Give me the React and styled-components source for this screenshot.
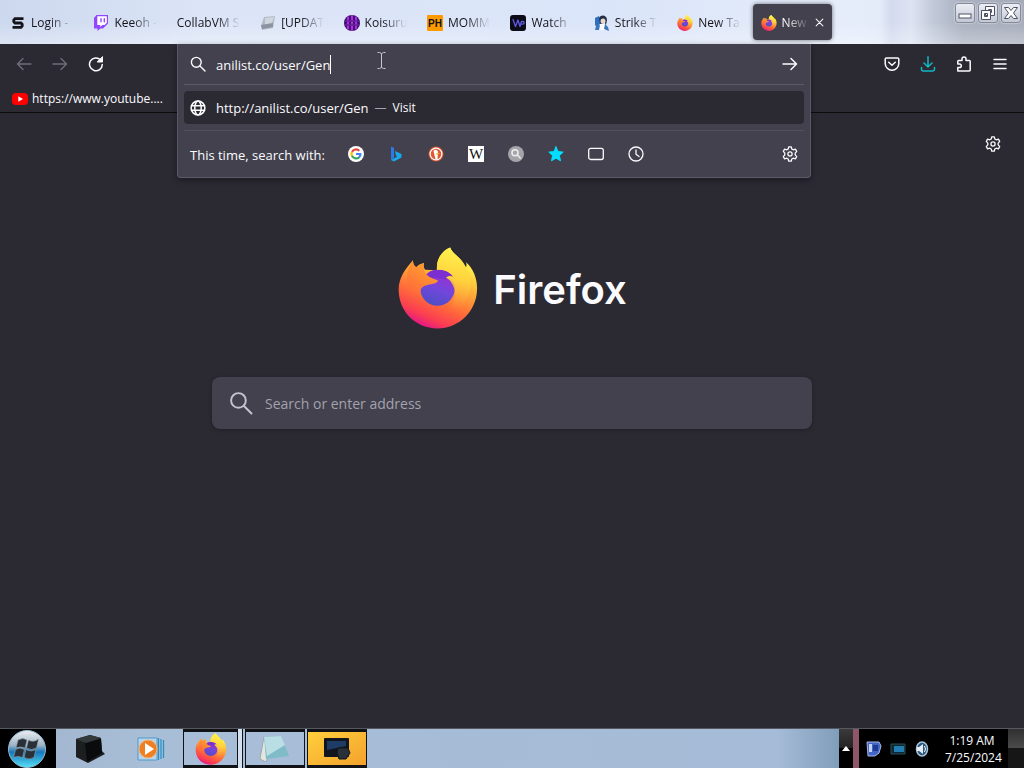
import React, { useId } from "react";
import styled, { createGlobalStyle } from "styled-components";

const ui = `"Open Sans", "Noto Sans", sans-serif`;

const GlobalStyle = createGlobalStyle`
  * { box-sizing: border-box; }
  body { margin: 0; background: #2b2a33; color: #fbfbfe; font: 12px/16px ${ui}; }
  button { border: 0; padding: 0; background: none; color: inherit; font: inherit; }
  input { border: 0; padding: 0; outline: 0; background: none; color: inherit; font: inherit; }
  svg { display: block; flex: none; }
`;

const Desktop = styled.div`
  display: flex;
  flex-direction: column;
  min-height: 100vh;
`;

const TitleBar = styled.header`
  display: flex;
  justify-content: space-between;
  align-items: flex-start;
  height: 44px;
  background:
    linear-gradient(#fff0 50%, #ffffff50),
    linear-gradient(90deg, #ccd8ee 0%, #dce5f7 20%, #dbe5f9 60%, #e6edfa 84%, #e3eaf8 86%, #d3dbee 87%, #dde3f2 89%, #c3cbdb 91%, #a9b0bf 94%, #a6abba 100%);
  color: #15141a;
`;

const TabStrip = styled.nav`
  display: grid;
  grid-template-columns: repeat(10, minmax(0, 1fr));
  flex: 0 1 834px;
  height: 44px;
  padding: 4px 0;
`;

const Tab = styled.button`
  display: flex;
  align-items: center;
  gap: 5px;
  min-width: 0;
  margin: 0 2px;
  padding: 1px 8px 0;
  border-radius: 4px;
  text-align: left;
  background: ${(p) => (p.$active ? "#42414d" : "transparent")};
  color: ${(p) => (p.$active ? "#fbfbfe" : "#15141a")};
  box-shadow: ${(p) => (p.$active ? "0 0 4px #0008" : "none")};
`;

const TabLabel = styled.span`
  flex: 1;
  min-width: 0;
  overflow: hidden;
  white-space: nowrap;
  mask-image: linear-gradient(to left, transparent, #000 24px);
`;

const WindowControls = styled.div`
  display: flex;
  gap: 3px;
  padding: 3px 3px 0 0;
`;

const WindowButton = styled.button`
  display: grid;
  place-items: center;
  width: 20px;
  height: 20px;
  border: 1px solid #868b9b;
  border-radius: 3px;
  background: linear-gradient(#eceef4, #c3c8d5);
  box-shadow: 0 0 2px #fff;
`;

const NavBar = styled.div`
  display: flex;
  align-items: center;
  height: 40px;
  padding: 0 6px;
`;

const ToolButton = styled.button`
  display: grid;
  place-items: center;
  width: 36px;
  height: 32px;
  color: ${(p) => p.$tone || "#fbfbfe"};
`;

const AddressSlot = styled.div`
  position: relative;
  flex: 1;
  align-self: stretch;
  margin: 0 63px;
`;

const AddressPanel = styled.section`
  position: absolute;
  inset: 0 0 auto 0;
  z-index: 2;
  padding: 0 6px;
  background: #42414d;
  border: 1px solid #5b5a67;
  border-top: 0;
  border-radius: 0 0 4px 4px;
  box-shadow: 0 2px 6px #0006;
  font-size: 13px;
  line-height: 20px;
`;

const AddressRow = styled.form`
  display: flex;
  align-items: center;
  height: 41px;
  padding: 0 6px;
  border-bottom: 1px solid #5b5a67;
`;

const AddressInput = styled.input`
  field-sizing: content;
  margin-left: 10px;
  padding-top: 2px;
`;

const Caret = styled.span`
  width: 1px;
  height: 19px;
  background: #fff;
`;

const GoButton = styled.button`
  margin-left: auto;
`;

const Pointer = styled.svg`
  position: absolute;
  left: 199px;
  top: 7px;
`;

const Result = styled.a`
  display: flex;
  align-items: center;
  height: 33px;
  margin: 6px 0;
  padding: 0 6px;
  border-radius: 4px;
  background: #2b2a33;
  color: #fbfbfe;
  text-decoration: none;
`;

const ResultUrl = styled.span`
  margin-left: 10px;
`;

const ResultAction = styled.span`
  font-size: 12px;
  &::before {
    content: "—";
    margin: 0 6px;
    color: #a5a4ae;
  }
`;

const Engines = styled.div`
  display: flex;
  align-items: center;
  height: 47px;
  padding: 0 6px;
  border-top: 1px solid #52515e;
`;

const EnginesLabel = styled.span`
  width: 134px;
  padding-top: 2px;
  white-space: nowrap;
`;

const EngineList = styled.div`
  display: flex;
  margin-left: 12px;
`;

const EngineButton = styled.button`
  display: grid;
  place-items: center;
  width: 40px;
  height: 32px;
`;

const SettingsButton = styled.button`
  margin-left: auto;
`;

const Bookmarks = styled.nav`
  display: flex;
  align-items: center;
  height: 29px;
  padding: 0 12px;
  border-bottom: 1px solid #0c0c0d;
`;

const Bookmark = styled.a`
  display: flex;
  align-items: center;
  gap: 4px;
  padding-top: 1px;
  color: #fbfbfe;
  text-decoration: none;
`;

const NewTabPage = styled.main`
  flex: 1;
  display: flex;
  flex-direction: column;
  align-items: center;
  padding: 23px 23px 40px;
`;

const Personalize = styled.button`
  align-self: flex-end;
`;

const Brand = styled.div`
  display: flex;
  align-items: center;
  gap: 14px;
  margin-top: 95px;
`;

const Wordmark = styled.h1`
  margin: 0;
  padding-top: 4px;
  color: #fbfbfe;
  font: 600 40px/48px Inter, sans-serif;
`;

const SearchBox = styled.label`
  display: flex;
  align-items: center;
  gap: 12px;
  width: 100%;
  max-width: 600px;
  height: 52px;
  margin-top: 48px;
  padding: 0 17px;
  border-radius: 8px;
  background: #42414d;
  box-shadow: 0 1px 4px #0004;
  color: #c4c3ce;
`;

const SearchInput = styled.input`
  flex: 1;
  padding-top: 2px;
  font-size: 14px;
  line-height: 20px;
  &::placeholder { color: #a3a2ae; opacity: 1; }
`;

const TaskBar = styled.footer`
  display: flex;
  height: 40px;
  border-top: 1px solid #55585f;
  background: linear-gradient(90deg, #9fb4cc, #a8bdd6 14%, #a5bbd7 76%, #7f9dba 82%);
`;

const StartButton = styled.button`
  display: grid;
  place-items: center;
  width: 56px;
  padding-right: 2px;
  background: #000;
`;

const TaskButtons = styled.div`
  display: flex;
  flex: 1;
`;

const Pinned = styled.button`
  display: grid;
  place-items: center;
  width: 61px;
  padding-left: 6px;
`;

const OpenTask = styled.button`
  display: grid;
  place-items: center;
  width: 60px;
  margin-left: 2px;
  border: solid #101216;
  border-width: 3px 1px;
  background: ${(p) => (p.$alert ? "linear-gradient(150deg, #ffcf3c, #f3a12c)" : "#a8bdd8")};
`;

const WindowStack = styled.div`
  display: flex;
  margin-left: 5px;
  padding-right: 4px;
  border-right: 1px solid #101216;
  background: #d5e0ee;
  ${OpenTask} {
    width: 55px;
    margin-left: 0;
  }
`;

const Tray = styled.div`
  display: flex;
  align-items: center;
  background: #000;
`;

const TrayToggle = styled.button`
  display: grid;
  place-items: center;
  align-self: stretch;
  width: 20px;
  border-right: 6px solid #8e5668;
  background: linear-gradient(#3a3a3a, #222 50%, #000 50%);
`;

const TrayIcons = styled.div`
  display: flex;
  gap: 8px;
  padding: 0 15px 0 7px;
`;

const Clock = styled.time`
  width: 54px;
  text-align: center;
  white-space: nowrap;
  font-size: 12px;
  line-height: 17px;
`;

const ShowDesktop = styled.button`
  align-self: stretch;
  width: 16px;
  margin-left: 9px;
  background: linear-gradient(#303030, #4a4a4a 48%, #161616 50%);
`;

const Icon = ({ size = 16, children, ...rest }) => (
  <svg width={size} height={size} viewBox="0 0 16 16" fill="none" stroke="currentColor"
    strokeWidth="1.3" strokeLinecap="round" strokeLinejoin="round" aria-hidden="true" {...rest}>
    {children}
  </svg>
);

function FirefoxLogo({ size }) {
  const id = useId();
  const ref = (n) => `url(#${id}${n})`;
  return (
    <svg width={size} height={size} viewBox="0 0 80 83" aria-hidden="true">
      <defs>
        <linearGradient id={`${id}a`} x1="0.75" y1="0.1" x2="0.35" y2="1">
          <stop offset="0.1" stopColor="#ffe847" />
          <stop offset="0.4" stopColor="#ffa436" />
          <stop offset="0.65" stopColor="#ff6a3a" />
          <stop offset="0.86" stopColor="#fb3d52" />
          <stop offset="1" stopColor="#e31587" />
        </linearGradient>
        <linearGradient id={`${id}b`} x1="0.6" y1="0" x2="0.5" y2="1">
          <stop offset="0" stopColor="#fff44f" />
          <stop offset="0.5" stopColor="#ffd23c" />
          <stop offset="1" stopColor="#ff9640" stopOpacity="0" />
        </linearGradient>
        <linearGradient id={`${id}c`} x1="0.7" y1="0" x2="0.3" y2="1">
          <stop offset="0" stopColor="#a02ccf" />
          <stop offset="0.5" stopColor="#7346dc" />
          <stop offset="1" stopColor="#4a4fc4" />
        </linearGradient>
        <linearGradient id={`${id}d`} x1="0.8" y1="0" x2="0.2" y2="1">
          <stop offset="0" stopColor="#ffa62e" />
          <stop offset="0.5" stopColor="#ff8a34" />
          <stop offset="1" stopColor="#ff6a3a" />
        </linearGradient>
      </defs>
      <path fill={ref("a")} d="M14.7 13.5C14.5 16.5 15.5 19 18 20.5C20 18.5 23 17 25.7 16.3C25 19 25.5 21 27 23C31 23 35 23.5 39 23.5C38 13 43 4.5 52.3 .5C54 6 61 9 65.5 16L68 21C69 19.500 69 18 68.500 15.500C76 22 80 33 79.500 43C79 65 61 82.500 39.500 82.500C17 82.500 0 65 .2 43C.3 31 7 22 14.700 13.500Z" />
      <circle cx="39.500" cy="42" r="17.500" fill={ref("c")} />
      <path fill="#7b2fd0" d="M27 29C34 20 50 21 56 31L48 33C42 31 34 31 27 32Z" />
      <path fill={ref("b")} d="M52.300 .5C54 6 61 9 65.500 16C75 29 76 48 64 59C60 63 55 65 49 64C57 58 59 49 56 41C54 35 51 32 48 31C50 29 53 29 56 30C51 25 45 22 39 23.500C38 13 43 4.500 52.300 .5Z" />
      <path fill={ref("d")} d="M14.700 13.500C14.500 16.500 15.500 19 18 20.500C20 18.500 23 17 25.700 16.300C25 20 26 24 27.500 27C31 31 36 32 40 34C39.500 37.500 32 37.500 27.500 39C23.500 40.500 21.500 43 22.500 47C17 48 12 44 10 39C7 34 8 24 14.700 13.500Z" />
    </svg>
  );
}

const SearchIcon = ({ size = 16, width = 1.4 }) => (
  <Icon size={size} strokeWidth={width}><circle cx="6.300" cy="6.300" r="4.900" /><path d="M10 10l5 5" /></Icon>
);

const GearIcon = () => (
  <Icon strokeWidth="1.300">
    <path d="M6.700 .8h2.600l.5 2.200 1.400.8 2.200-.6 1.300 2.200-1.500 1.700v1.800l1.500 1.700-1.300 2.200-2.200-.6-1.400.8-.5 2.200H6.700l-.5-2.200-1.400-.8-2.200.6-1.300-2.200 1.500-1.700V7.100L1.300 5.400l1.300-2.200 2.200.6 1.400-.8z" />
    <circle cx="8" cy="8" r="2.100" />
  </Icon>
);

const GlobeIcon = () => (
  <Icon strokeWidth="1.500"><circle cx="8" cy="8" r="6.900" /><ellipse cx="8" cy="8" rx="3.200" ry="6.900" /><path d="M1.500 5.700h13M1.500 10.300h13" /></Icon>
);

const CloseIcon = () => <Icon size={9} strokeWidth="1.800"><path d="M2 2l12 12M14 2L2 14" /></Icon>;

const favicons = {
  login: <Icon strokeWidth="2.800" stroke="#15141a" strokeLinecap="butt" strokeLinejoin="miter"><path d="M13.500 3.600H5L3.800 5v1.700L5 8h6l1.200 1.300V11L11 12.400H2.500" /></Icon>,
  twitch: <Icon stroke="none"><path fill="#9146ff" d="M3.500 0L1 3v10.500h3.500V16L7.300 13.500H10l5-5V0z" /><path fill="#fff" d="M4.300 1.200h9.500v6.600l-2.200 2.200H9.300l-2 2v-2h-3z" /><path stroke="#9146ff" strokeWidth="1.400" d="M8 3.700v3M11.300 3.700v3" /></Icon>,
  card: <Icon stroke="none"><path fill="#b3bac4" d="M4 2l11-1-2 12-11 2-1-4z" /><path fill="#ced5de" d="M5 3l9-1-2 6-7 2z" /><path fill="#8a94a1" d="M1 10l12-2v4L2 14z" /></Icon>,
  koisuru: <Icon stroke="none"><circle cx="8" cy="8" r="8" fill="#3d1470" /><path stroke="#b32be6" strokeWidth="2" d="M4 2.500v11M8 1v14M12 2.500v11" /><path stroke="#672099" d="M1 6h14M1 10h14" /></Icon>,
  ph: <Icon stroke="none"><rect width="16" height="16" rx="1" fill="#ff9900" /><text x="8" y="12" textAnchor="middle" fill="#111" fontFamily="Liberation Sans, sans-serif" fontWeight="700" fontSize="10">PH</text></Icon>,
  watch: <Icon stroke="none"><rect width="16" height="16" rx="3" fill="#0c0b18" /><path stroke="#5f5ae0" strokeWidth="1.300" d="M3 4.500l2.500 7L8 5l2 6.500 1.500-5h1.300a1.300 1.300 0 010 2.700h-1.500" /></Icon>,
  strike: <Icon stroke="none"><path fill="#2c70bf" d="M1 3l4-2 2 7-4 4-2-2z" /><path fill="#253044" d="M5 3c2-4 8-3 8 2l-1 5-6-1z" /><circle cx="9" cy="6" r="2.500" fill="#e9d8d0" /><path fill="#fff" d="M6 9l5-1 2 7H5z" /><path fill="#3b75bb" d="M11 9l3 3 1 4-5-2zM2 11l4-1-1 5H1z" /></Icon>,
  firefox: <FirefoxLogo size={16} />,
};

const tabs = [
  ["login", "Login -"], ["twitch", "Keeoh -"], [null, "CollabVM S"],
  ["card", "[UPDAT"], ["koisuru", "Koisuru"], ["ph", "MOMM"],
  ["watch", "Watch"], ["strike", "Strike T"], ["firefox", "New Ta"],
];

const engines = [
  ["Google", <Icon stroke="none"><circle cx="8" cy="8" r="8" fill="#fff" /><g strokeWidth="2.200" strokeLinecap="butt"><path stroke="#ea4335" d="M4 6a4.500 4.500 0 017.300-1.200" /><path stroke="#fbbc05" d="M4.200 10.300A4.500 4.500 0 014 5.800" /><path stroke="#34a853" d="M11.200 11.200a4.500 4.500 0 01-7.200-1.300" /><path stroke="#4285f4" d="M8 8h4.500c0 1.500-.5 2.500-1.500 3.400" /></g></Icon>],
  ["Bing", <Icon stroke="none"><path fill="#2c79e8" d="M3 .5l3 1.200v10.200L3 14z" /><path fill="#18a9ed" d="M7 5l6.500 3v3.500L6 15.500 3 14l6-3.300-1.200-2z" /></Icon>],
  ["DuckDuckGo", <Icon stroke="none"><circle cx="8" cy="8" r="7.500" fill="#de5833" /><circle cx="8" cy="8" r="5.900" stroke="#fff" strokeWidth="1.200" /><path fill="#fff" d="M5.500 5c1-2 4.500-1.500 4.500 1.500l-.5 6.500-2 .3z" /><path fill="#f5b62c" d="M8 7h4l-3 2z" /></Icon>],
  ["Wikipedia", <Icon stroke="none"><path fill="#fff" d="M0 0h16v16H0z" /><text x="8" y="13" textAnchor="middle" fill="#111" fontFamily="Liberation Serif, serif" fontSize="15">W</text></Icon>],
  ["Search engine", <Icon stroke="none"><circle cx="8" cy="8" r="8" fill="#a5a4aa" /><circle cx="7" cy="6.800" r="3" stroke="#eee" strokeWidth="1.500" /><path stroke="#eee" strokeWidth="1.500" d="M9.300 9l3 3" /></Icon>],
  ["Bookmarks", <Icon fill="#00ddff" stroke="#00ddff" strokeWidth="1"><path d="M8 .8l2.100 4.800 5.100.5-3.800 3.500 1.100 5.200L8 12.200l-4.500 2.600 1.100-5.200L.8 6.100l5.100-.5z" /></Icon>],
  ["Tabs", <Icon><rect x=".7" y="2.300" width="14.600" height="11.200" rx="2" /></Icon>],
  ["History", <Icon><circle cx="8" cy="8" r="7" /><path d="M8 4v4.300l3 2.200" /></Icon>],
];

function WindowsOrb() {
  return (
    <svg width="40" height="38" viewBox="0 0 40 38" aria-hidden="true">
      <defs><linearGradient id="orb" x2="0" y2="1"><stop stopColor="#eceff2" /><stop offset=".4" stopColor="#9fb4c6" /><stop offset=".58" stopColor="#1577bb" /><stop offset="1" stopColor="#55e0f8" /></linearGradient></defs>
      <circle cx="20" cy="19" r="18.500" fill="url(#orb)" stroke="#93b9d0" />
      <path fill="#2a3038" stroke="#90a4b0" strokeWidth=".6" d="M11 10q5-3 9 0l-2 8q-5-2-9 0zM21.500 10q5 3 10-1l-2 9q-5 3-10 0zM8.500 19.500q4-3 9 0l-2 8q-5-2-9 0zM19 19.500q5 3 10 0l-2 8q-5 3-10 0z" />
    </svg>
  );
}

const BoxIcon = () => (
  <svg width="32" height="28" viewBox="0 0 32 28" aria-hidden="true">
    <path fill="#1c1f20" d="M2 4L16 0l11 3 1 13 3 3-17 9L2 22z" /><path fill="#0a0b0c" d="M11 8L27 4l1 14-15 9z" /><path fill="#34393b" d="M2 4L16 0l11 3-15 5z" />
  </svg>
);

const PlayerIcon = () => (
  <svg width="28" height="24" viewBox="0 0 28 24" aria-hidden="true">
    <path fill="#b8d5ef" stroke="#4d9bc8" d="M1 1h19v22H1z" /><path stroke="#268fc4" strokeWidth="1.200" d="M21.500 1v22M24 2v20M26.500 3v18" /><circle cx="11" cy="12" r="9" fill="#ee7f22" stroke="#f5b175" /><path fill="#fff" d="M8 6l9 6-9 6z" />
  </svg>
);

const NotesIcon = () => (
  <svg width="32" height="26" viewBox="0 0 32 26" aria-hidden="true">
    <path fill="#e3e6df" stroke="#8a8d88" strokeWidth=".6" d="M5 1L1 23l6 3 3-8z" /><path fill="#7fbcc8" d="M5 1l17-1 8 20-23 3z" /><path fill="#b9dfe5" d="M5 1l17-1 4 9-18 11z" />
  </svg>
);

const MonitorIcon = () => (
  <svg width="28" height="24" viewBox="0 0 28 24" aria-hidden="true">
    <rect x="1" y="1" width="25" height="19" rx="1" fill="#11161e" /><path fill="#1f3c66" d="M4 4h19v5L4 13z" /><path fill="#293039" stroke="#10141a" d="M15 11h10l2 5-4 6h-7l-2-6z" />
  </svg>
);

export default function App() {
  return (
    <Desktop>
      <GlobalStyle />
      <TitleBar>
        <TabStrip aria-label="Tabs">
          {tabs.map(([icon, label]) => (
            <Tab key={label}>{icon && favicons[icon]}<TabLabel>{label}</TabLabel></Tab>
          ))}
          <Tab $active>{favicons.firefox}<TabLabel>New</TabLabel><CloseIcon /></Tab>
        </TabStrip>
        <WindowControls>
          <WindowButton aria-label="Minimize"><svg width="16" height="16"><rect x="2" y="9" width="12" height="4" fill="#fff" stroke="#4c5165" /></svg></WindowButton>
          <WindowButton aria-label="Restore"><svg width="16" height="16" fill="#fff" stroke="#4c5165"><path d="M5.500 1.500h9v9h-9zM8.500 4.500h3v3h-3z" fillRule="evenodd" /><path d="M1.500 5.500h9v9h-9zM4.500 8.500h3v3h-3z" fillRule="evenodd" /></svg></WindowButton>
          <WindowButton aria-label="Close"><svg width="16" height="16" fill="#fff" stroke="#4c5165"><path d="M1.500 2.500h4L8 5.500l2.500-3h4L10.500 8l4 5.500h-4L8 10.500l-2.500 3h-4L5.500 8z" /></svg></WindowButton>
        </WindowControls>
      </TitleBar>

      <NavBar>
        <ToolButton aria-label="Back" $tone="#6f6e78"><Icon><path d="M15 8H1.500M7 2.500L1.500 8 7 13.500" /></Icon></ToolButton>
        <ToolButton aria-label="Forward" $tone="#6f6e78"><Icon><path d="M1 8h13.500M9 2.500L14.500 8 9 13.500" /></Icon></ToolButton>
        <ToolButton aria-label="Reload"><Icon strokeWidth="1.500"><path d="M14.300 8.500A6.400 6.400 0 1112.600 4" /><path fill="currentColor" strokeWidth="1" d="M14.500 1v5h-5z" /></Icon></ToolButton>
        <AddressSlot>
          <AddressPanel>
            <AddressRow onSubmit={(e) => e.preventDefault()}>
              <SearchIcon />
              <AddressInput aria-label="Address" defaultValue="anilist.co/user/Gen" />
              <Caret />
              <GoButton aria-label="Go"><Icon strokeWidth="1.500"><path d="M1 8h13.500M9 2.500L14.500 8 9 13.500" /></Icon></GoButton>
            </AddressRow>
            <Result href="#visit">
              <GlobeIcon />
              <ResultUrl>http://anilist.co/user/Gen</ResultUrl>
              <ResultAction>Visit</ResultAction>
            </Result>
            <Engines>
              <EnginesLabel>This time, search with:</EnginesLabel>
              <EngineList>
                {engines.map(([name, icon]) => <EngineButton key={name} aria-label={name}>{icon}</EngineButton>)}
              </EngineList>
              <SettingsButton aria-label="Search settings"><GearIcon /></SettingsButton>
            </Engines>
            <Pointer width="9" height="19" fill="none" stroke="#c9c8d0" aria-hidden="true"><path d="M.5 1.500h2l2 1 2-1h2M4.500 2.500v14M.5 17.500h2l2-1 2 1h2" /></Pointer>
          </AddressPanel>
        </AddressSlot>
        <ToolButton aria-label="Save to Pocket"><Icon strokeWidth="1.500"><path d="M2.500 2h11a1.300 1.300 0 011.300 1.300V7.500a6.800 6.800 0 01-13.600 0V3.300A1.300 1.300 0 012.500 2z" /><path d="M4.700 6.300L8 9.300l3.300-3" /></Icon></ToolButton>
        <ToolButton aria-label="Downloads" $tone="#12b8c4"><Icon strokeWidth="1.500"><path d="M8 .8v10M4 7l4 4 4-4M1.500 11.500v1.800a1.700 1.700 0 001.700 1.700h9.600a1.700 1.700 0 001.700-1.700v-1.800" /></Icon></ToolButton>
        <ToolButton aria-label="Extensions"><Icon strokeWidth="1.500"><path d="M2 15h11.300a.9.900 0 00.9-.9V5.300a.9.900 0 00-.9-.9H10V3a2 2 0 00-4 0v1.400H2.700a.9.900 0 00-.9.900V8h1.700a1.800 1.800 0 010 3.600H1.800V15z" /></Icon></ToolButton>
        <ToolButton aria-label="Menu"><Icon strokeWidth="1.500"><path d="M2 3.500h12M2 8h12M2 12.500h12" /></Icon></ToolButton>
      </NavBar>

      <Bookmarks aria-label="Bookmarks">
        <Bookmark href="#youtube">
          <svg width="16" height="12" viewBox="0 0 16 12" aria-hidden="true"><rect width="16" height="12" rx="4" fill="#f00" /><path fill="#fff" d="M6.300 3.300L11 6l-4.700 2.700z" /></svg>
          https://www.youtube....
        </Bookmark>
      </Bookmarks>

      <NewTabPage>
        <Personalize aria-label="Personalize new tab"><GearIcon /></Personalize>
        <Brand><FirefoxLogo size={82} /><Wordmark>Firefox</Wordmark></Brand>
        <SearchBox>
          <SearchIcon size={24} width={1.3} />
          <SearchInput aria-label="Search or enter address" placeholder="Search or enter address" />
        </SearchBox>
      </NewTabPage>

      <TaskBar>
        <StartButton aria-label="Start"><WindowsOrb /></StartButton>
        <TaskButtons>
          <Pinned aria-label="Virtual machine"><BoxIcon /></Pinned>
          <Pinned aria-label="Media player"><PlayerIcon /></Pinned>
          <WindowStack><OpenTask aria-label="Firefox"><FirefoxLogo size={32} /></OpenTask></WindowStack>
          <OpenTask aria-label="Notes"><NotesIcon /></OpenTask>
          <OpenTask $alert aria-label="Display"><MonitorIcon /></OpenTask>
        </TaskButtons>
        <Tray>
          <TrayToggle aria-label="Show hidden icons"><svg width="8" height="5"><path fill="#fff" d="M4 0l4 5H0z" /></svg></TrayToggle>
          <TrayIcons>
            <svg width="16" height="16" aria-hidden="true"><path fill="#4265c6" stroke="#a8b8e8" d="M1 1h12l2 4-2 7-4 3H2z" /><path fill="#c5d4f5" d="M3 3h3v8H3z" /><path fill="#203b92" d="M7 4h5v6H7z" /></svg>
            <svg width="16" height="16" aria-hidden="true"><path fill="#0f2830" stroke="#284f5c" d="M1 3h14v10H1z" /><path fill="#217db0" d="M4 5h10v6H4z" /></svg>
            <svg width="16" height="16" aria-hidden="true"><ellipse cx="8" cy="8" rx="5.500" ry="7" fill="#28547c" stroke="#a8c2d6" strokeWidth="1.500" /><path fill="#e5edf3" d="M3 6h2l4-3v10l-4-3H3z" /><path fill="none" stroke="#fff" d="M10.500 5q2 3 0 6" /></svg>
          </TrayIcons>
          <Clock>1:19 AM<br />7/25/2024</Clock>
          <ShowDesktop aria-label="Show desktop" />
        </Tray>
      </TaskBar>
    </Desktop>
  );
}
